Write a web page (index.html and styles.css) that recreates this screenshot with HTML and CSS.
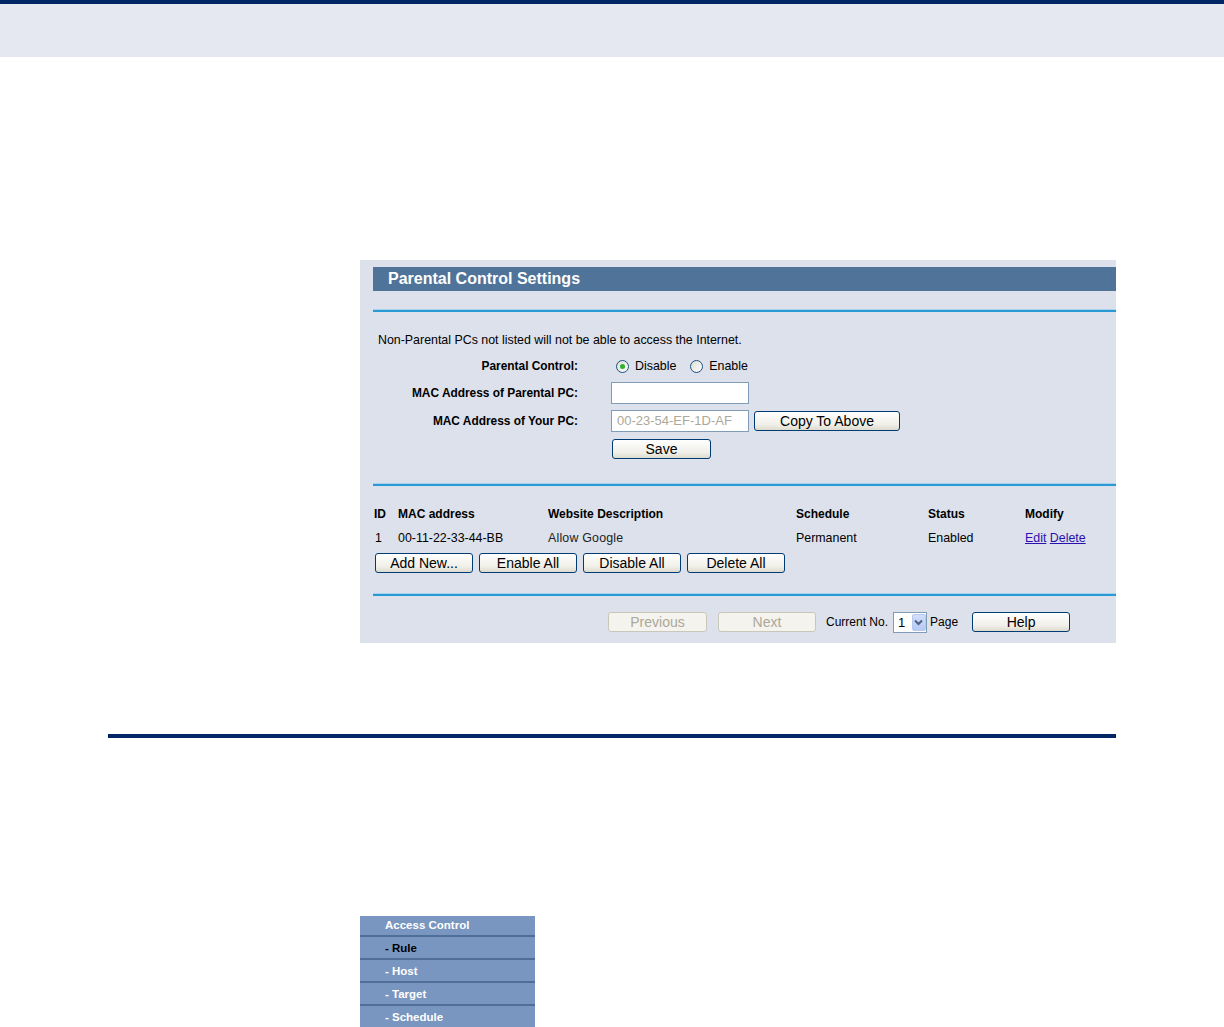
FILE: index.html
```html
<!DOCTYPE html>
<html>
<head>
<meta charset="utf-8">
<link rel="stylesheet" href="styles.css">
</head>
<body>
<div class="topbar"></div>

<div class="panel">
  <div class="panel-title">Parental Control Settings</div>
  <div class="rule-line first"></div>

  <div class="intro">Non-Parental PCs not listed will not be able to access the Internet.</div>
  <div class="form">
    <div class="row r-parental">
      <div class="label">Parental Control:</div>
      <div class="ctrl">
        <span class="radio checked"></span><span class="radio-text">Disable</span>
        <span class="radio second"></span><span class="radio-text">Enable</span>
      </div>
    </div>
    <div class="row">
      <div class="label">MAC Address of Parental PC:</div>
      <div class="ctrl"><span class="input"></span></div>
    </div>
    <div class="row">
      <div class="label">MAC Address of Your PC:</div>
      <div class="ctrl"><span class="input disabled">00-23-54-EF-1D-AF</span><span class="btn btn-copy">Copy To Above</span></div>
    </div>
    <div class="row">
      <div class="label"></div>
      <div class="ctrl"><span class="btn btn-save">Save</span></div>
    </div>
  </div>

  <div class="rule-line second"></div>

  <div class="table">
    <div class="trow thead">
      <span>ID</span><span>MAC address</span><span>Website Description</span><span>Schedule</span><span>Status</span><span>Modify</span>
    </div>
    <div class="trow tdata">
      <span class="c-id">1</span><span>00-11-22-33-44-BB</span><span class="desc">Allow Google</span><span>Permanent</span><span>Enabled</span><span><a class="lnk">Edit</a> <a class="lnk">Delete</a></span>
    </div>
  </div>
  <div class="actions">
    <span class="btn">Add New...</span>
    <span class="btn">Enable All</span>
    <span class="btn">Disable All</span>
    <span class="btn">Delete All</span>
  </div>

  <div class="rule-line third"></div>

  <div class="footer">
    <span class="btn off b-prev">Previous</span>
    <span class="btn off b-next">Next</span>
    <span class="f-text cur">Current No.</span>
    <span class="select"><span class="sel-val">1</span><span class="sel-arrow"><svg width="9" height="7" viewBox="0 0 9 7"><path d="M1 1.5 L4.5 5 L8 1.5" fill="none" stroke="#4d6185" stroke-width="2"/></svg></span></span>
    <span class="f-text page">Page</span>
    <span class="btn b-help">Help</span>
  </div>
</div>

<div class="bottom-rule"></div>

<div class="menu">
  <div class="menu-item head">Access Control</div>
  <div class="menu-item active">- Rule</div>
  <div class="menu-item">- Host</div>
  <div class="menu-item">- Target</div>
  <div class="menu-item last">- Schedule</div>
</div>
</body>
</html>
```

FILE: styles.css
```css
html, body {
  margin: 0;
  padding: 0;
  background: #ffffff;
  font-family: "Liberation Sans", Arial, sans-serif;
  font-size: 12.4px;
  color: #000;
}

.topbar {
  height: 53px;
  border-top: 4px solid #002664;
  background: #e5e8f1;
}

.panel {
  margin: 203px 0 0 360px;
  width: 743px;
  padding: 7px 0 11px 13px;
  background: #dce1eb;
}

.panel-title {
  height: 24px;
  line-height: 23px;
  background: #4f7399;
  color: #fff;
  font-weight: bold;
  font-size: 16px;
  padding-left: 15px;
}

.rule-line {
  height: 2px;
  border-top: 1px solid #a9d2ec;
  background: #2a9ad6;
}
.rule-line.first { margin-top: 18px; }
.rule-line.second { margin-top: 20px; }
.rule-line.third { margin-top: 20px; }

.intro {
  margin-top: 15px;
  height: 26px;
  line-height: 26px;
  padding-left: 5px;
}

.row {
  display: flex;
  align-items: center;
  height: 28px;
}
.row.r-parental { height: 26px; }

.label {
  width: 205px;
  text-align: right;
  font-weight: bold;
  font-size: 11.9px;
  flex: none;
}

.ctrl {
  margin-left: 33px;
  display: flex;
  align-items: center;
}

.radio {
  width: 11px;
  height: 11px;
  border: 1px solid #1c5180;
  border-radius: 50%;
  background: linear-gradient(135deg, #dcdcd6, #ffffff);
  margin-left: 5px;
  position: relative;
}
.radio.second { margin-left: 14px; }
.radio.checked::after {
  content: "";
  position: absolute;
  left: 3px;
  top: 3px;
  width: 5px;
  height: 5px;
  border-radius: 50%;
  background: #2fb32f;
}
.radio-text { margin-left: 6px; }

.input {
  box-sizing: border-box;
  width: 138px;
  height: 22px;
  border: 1px solid #7f9db9;
  background: #fff;
  display: inline-block;
  line-height: 20px;
  padding-left: 5px;
}
.input.disabled {
  color: #aca899;
  font-size: 13px;
}

.btn {
  box-sizing: border-box;
  display: inline-block;
  height: 20px;
  width: 98px;
  line-height: 18px;
  text-align: center;
  font-size: 14px;
  border: 1px solid #003c74;
  border-radius: 3px;
  background: linear-gradient(#ffffff, #f0efe8 70%, #dedbce);
  color: #000;
}
.btn-copy { width: 146px; margin-left: 5px; }
.btn-save { width: 99px; margin-left: 1px; }

.table { margin-top: 15px; padding-left: 1px; }
.trow {
  display: grid;
  grid-template-columns: 24px 150px 248px 132px 97px auto;
  height: 24px;
  align-items: center;
}
.thead { font-weight: bold; height: 25px; font-size: 12px; }
.tdata .c-id { padding-left: 1px; }
.desc { color: #222; letter-spacing: 0.2px; }
.lnk { color: #2a10b0; text-decoration: underline; }

.actions {
  margin-top: 3px;
  display: flex;
  gap: 6px;
  padding-left: 2px;
}

.footer {
  margin-top: 16px;
  display: flex;
  align-items: center;
  height: 20px;
  padding-left: 235px;
}
.btn.off {
  border-color: #c9c7ba;
  color: #aca899;
  background: #f4f3ee;
}
.b-prev { width: 99px; }
.b-next { margin-left: 11px; width: 98px; }
.f-text { font-size: 12px; }
.cur { margin-left: 10px; }
.select {
  box-sizing: border-box;
  margin-left: 5px;
  width: 34px;
  height: 21px;
  border: 1px solid #7f9db9;
  background: #fff;
  display: flex;
  align-items: center;
}
.sel-val { width: 15px; padding-left: 4px; font-size: 13px; }
.sel-arrow {
  box-sizing: border-box;
  width: 15px;
  height: 17px;
  border: 1px solid #b8c9ef;
  border-radius: 2px;
  background: linear-gradient(#d3def8, #b6c9f6);
  display: flex;
  align-items: center;
  justify-content: center;
}
.page { margin-left: 3px; }
.b-help { margin-left: 14px; }

.bottom-rule {
  margin: 91px 0 0 108px;
  width: 1008px;
  height: 4px;
  background: #002664;
}

.menu {
  margin: 178px 0 0 360px;
  width: 175px;
  background: #7896c0;
}
.menu-item {
  height: 19px;
  padding-top: 2px;
  line-height: 19px;
  padding-left: 25px;
  color: #fff;
  font-weight: bold;
  font-size: 11.5px;
  border-bottom: 2px solid #4f6f99;
}
.menu-item.head { height: 18px; padding-top: 1px; line-height: 17px; }
.menu-item.active { color: #000; }
.menu-item.last { border-bottom: none; }
```
